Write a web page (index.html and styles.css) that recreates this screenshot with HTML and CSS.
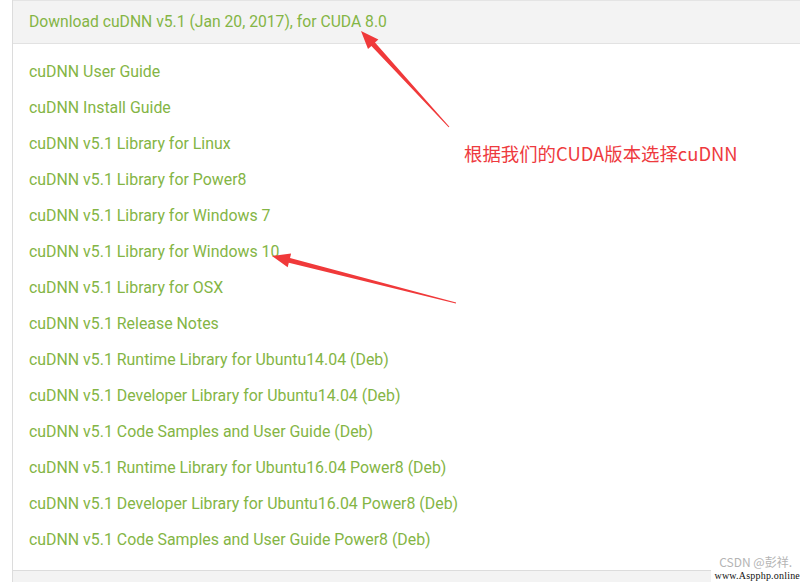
FILE: index.html
```html
<!DOCTYPE html>
<html>
<head>
<meta charset="utf-8">
<link rel="stylesheet" href="styles.css">
</head>
<body>
<div class="page">
  <div class="panel">
    <div class="panel-head">Download cuDNN v5.1 (Jan 20, 2017), for CUDA 8.0</div>
    <ul class="links">
      <li>cuDNN User Guide</li>
      <li>cuDNN Install Guide</li>
      <li>cuDNN v5.1 Library for Linux</li>
      <li>cuDNN v5.1 Library for Power8</li>
      <li>cuDNN v5.1 Library for Windows 7</li>
      <li>cuDNN v5.1 Library for Windows 10</li>
      <li>cuDNN v5.1 Library for OSX</li>
      <li>cuDNN v5.1 Release Notes</li>
      <li>cuDNN v5.1 Runtime Library for Ubuntu14.04 (Deb)</li>
      <li>cuDNN v5.1 Developer Library for Ubuntu14.04 (Deb)</li>
      <li>cuDNN v5.1 Code Samples and User Guide (Deb)</li>
      <li>cuDNN v5.1 Runtime Library for Ubuntu16.04 Power8 (Deb)</li>
      <li>cuDNN v5.1 Developer Library for Ubuntu16.04 Power8 (Deb)</li>
      <li>cuDNN v5.1 Code Samples and User Guide Power8 (Deb)</li>
    </ul>
    <div class="panel-foot"></div>
  </div>
  <svg class="arrows" width="800" height="582" viewBox="0 0 800 582">
    <polygon fill="#f0393a" points="361,31 378.4,39.6 375,42.6 449.4,126.7 448.6,127.3 371.4,46 368,49"/>
    <polygon fill="#f0393a" points="272,256 291.1,253.6 290,258 456.1,302.5 455.9,303.5 288.8,262.8 287.7,267.2"/>
  </svg>
  <div class="note">根据我们的CUDA版本选择cuDNN</div>
  <div class="mark">
    <span class="csdn">CSDN @彭祥.</span>
    <span class="site">www.Aspphp.online</span>
  </div>
</div>
</body>
</html>
```
FILE: styles.css
```css
html, body {
  margin: 0;
  padding: 0;
  background: #ffffff;
}
.page {
  position: relative;
  width: 800px;
  height: 582px;
  overflow: hidden;
}
.panel {
  margin-left: 12px;
  border-left: 1px solid #dcdcdc;
  display: flex;
  flex-direction: column;
}
.panel-head {
  height: 42px;
  line-height: 42px;
  background: #f3f3f3;
  border-top: 1px solid #e4e4e4;
  border-bottom: 1px solid #e2e2e2;
  padding-left: 16px;
  font-family: Roboto, "Liberation Sans", sans-serif;
  font-size: 15.7px;
  color: #84b545;
}
.links {
  list-style: none;
  margin: 0;
  padding: 10px 0 12px 16px;
}
.links li {
  height: 36px;
  line-height: 36px;
  font-family: Roboto, "Liberation Sans", sans-serif;
  font-size: 15.9px;
  color: #84b545;
  white-space: nowrap;
}
.panel-foot {
  border-top: 1px solid #dcdcdc;
  background: #f3f3f3;
  height: 20px;
}
.arrows {
  position: absolute;
  left: 0;
  top: 0;
}
.note {
  position: absolute;
  left: 464px;
  top: 141px;
  font-family: "Noto Sans CJK SC", sans-serif;
  font-size: 18.4px;
  line-height: 24px;
  color: #ee3a3e;
  white-space: nowrap;
}
.mark {
  position: absolute;
  right: 0;
  top: 554px;
  display: flex;
  flex-direction: column;
  align-items: flex-end;
}
.csdn {
  font-family: "Noto Sans CJK SC", sans-serif;
  font-size: 12px;
  line-height: 16px;
  color: #b4b4b4;
  padding-right: 8px;
}
.site {
  font-family: "Liberation Serif", serif;
  font-size: 10px;
  line-height: 12px;
  color: #111;
  background: #fff;
  padding-left: 3px;
  letter-spacing: 0.2px;
}
```
